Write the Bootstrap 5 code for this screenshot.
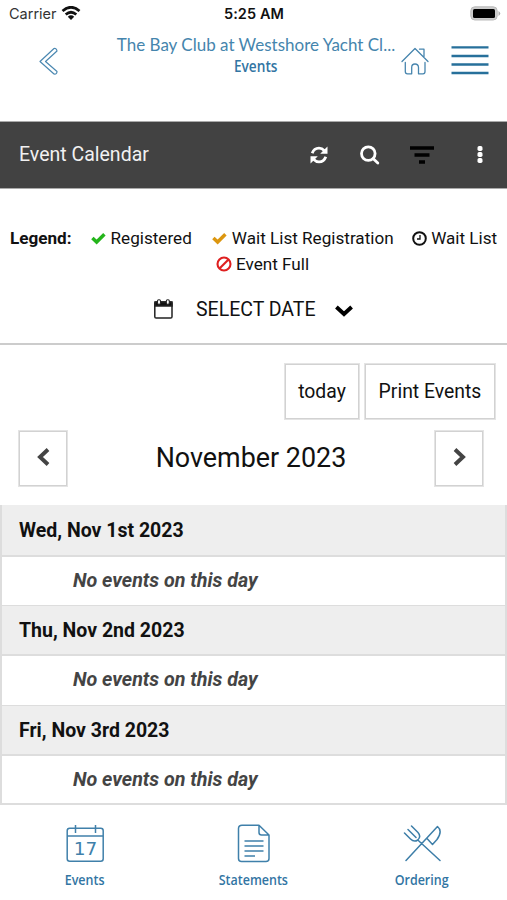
<!DOCTYPE html>
<html lang="en">
<head>
<meta charset="utf-8">
<meta name="viewport" content="width=device-width, initial-scale=1">
<title>Event Calendar</title>
<link href="https://cdn.jsdelivr.net/npm/bootstrap@5.3.0/dist/css/bootstrap.min.css" rel="stylesheet">
<style>
body{font-family:Roboto,sans-serif;color:#111;height:900px;overflow:hidden;background:#fff}
svg{display:block;flex:none}
.status{height:28px;font:14.5px/28px Inter,sans-serif;padding:0 8px 0 9px}
.status .side{width:130px}
.carrier{font-size:14.5px;color:#333}
.clock{font-weight:600;font-size:14.5px;letter-spacing:.1px}
.blue{color:#3275a3}
.apphead{height:93px;padding:6px 18px 0 38px}
.brand{font:17px/22px Lato,sans-serif;white-space:nowrap;color:#4585ad}
.page{font:600 15.5px/20px "Open Sans",sans-serif}
.page span,.tab span{display:inline-block;transform:scaleX(.88)}
.tools{height:68px;background:#424242;border-top:1px solid #aaa;border-bottom:1px solid #aaa;color:#f1f1f1;font-size:19.5px;padding:0 24px 1px 19px}
.legend{height:156px;border-bottom:2px solid #ccc;font-size:17.13px;line-height:26px;padding-top:36px}
.legend-row{height:26px;white-space:nowrap}
.select{font-size:19.5px;margin-top:20px;height:26px;padding-left:154px}
.box{border:1.5px solid #d2d2d2;outline:.5px solid #e4e4e4;height:55px;border-radius:0;font-size:19.4px;color:#111;padding:0;background:#fff;display:flex;align-items:center;justify-content:center}
.month{font-size:26.9px;line-height:32px;padding-bottom:1px}
.days{border:solid #ddd;border-width:0 2px 2px 2px;margin-top:19px;height:300px}
.day{height:51.2px;background:#eee;font-weight:700;font-size:19.5px;padding:0 17px;line-height:52px;border-bottom:2px solid #ddd}
.day:first-child{height:52px}
.none{height:48.2px;font-weight:700;font-style:italic;font-size:19.7px;padding-left:71px;line-height:47px;color:#444}
.none+.day{border-top:1px solid #ddd;line-height:49px}
.tabs{padding-top:19px}
.tab{width:168.5px;font:600 14.2px/20px "Open Sans",sans-serif;color:#3275a3}
.tab span{margin-top:7px}
</style>
<script src="https://cdn.jsdelivr.net/npm/bootstrap@5.3.0/dist/js/bootstrap.bundle.min.js"></script>
</head>
<body>
<div class="status d-flex justify-content-between align-items-center">
  <div class="side d-flex align-items-center"><span class="carrier">Carrier</span>
    <svg class="ms-1" style="margin-top:-2px" width="20" height="15" viewBox="0 0 20 15" fill="none" stroke="#111" stroke-width="2.7"><path d="M1.5 5Q10-2.5 18.5 5M4.7 8.5Q10 4 15.3 8.5"/><path d="M6.8 10.7Q10 8 13.2 10.7L10 14Z" fill="#111" stroke="none"/></svg></div>
  <div class="clock">5:25 AM</div>
  <div class="side d-flex justify-content-end"><svg style="margin:-2px -2px 0 0" width="31" height="15" viewBox="0 0 31 15"><rect x=".8" y=".8" width="26.4" height="13.2" rx="4" fill="#ccc" stroke="#bbb"/><rect x="3" y="3" width="22" height="9" rx="1.5" fill="#000"/><path d="M28.5 5Q32 7.3 28.5 10Z" fill="#aaa"/></svg></div>
</div>
<header class="apphead d-flex blue">
  <svg style="margin-top:9px" width="20" height="36" viewBox="0 0 20 36" fill="none" stroke="#4b88b1" stroke-width="1.2" stroke-linejoin="round"><path d="M16 5.5Q18.5 5 19 8L7.5 18.5L19 28.5Q19 31.5 16 31L2 18.5Z"/></svg>
  <div class="text-center flex-shrink-0" style="width:280px;margin-left:58px"><div class="brand">The Bay Club at Westshore Yacht Cl...</div><div class="page"><span>Events</span></div></div>
  <svg style="margin:13px 0 0 5px" width="28" height="28" viewBox="0 0 28 28" fill="none" stroke="#4785ae" stroke-width="1.3" stroke-linecap="round" stroke-linejoin="round"><path d="M1 14.5L14 1.5L27 14.5M18.5 2.2H23V9.5M4.3 15.5V24.5Q4.3 26.8 6.5 26.8H10.7V20.5Q10.7 17 14 17T17.5 20.5V26.8H22Q24 26.8 24 24.5V15.5"/></svg>
  <svg style="margin:11px 0 0 22px" width="38" height="31" viewBox="0 0 38 31" stroke="#27709b" stroke-width="2.3"><path d="M.5 2.3H37.5M.5 11H37.5M.5 19.5H37.5M.5 28H37.5"/></svg>
</header>
<div class="tools d-flex align-items-center"><span class="me-auto">Event Calendar</span>
  <svg width="18" height="18" viewBox="0 0 18 18" fill="none" stroke="#fff" stroke-width="2.8"><path d="M2.2 7.3Q4 2.2 9 2.2Q12 2.2 14.5 4.8M15.8 10.7Q14 15.8 9 15.8Q6 15.8 3.5 13.2"/><path d="M17.5 .5V7.8H10.2ZM.5 17.5V10.2H7.8Z" fill="#fff" stroke="none"/></svg>
  <svg style="margin-left:32px" width="20" height="20" viewBox="0 0 20 20" fill="none" stroke="#fff" stroke-width="2.8"><circle cx="8.3" cy="8.6" r="6.8"/><path d="M13.3 13.7L17.8 18" stroke-linecap="round"/></svg>
  <svg style="margin-left:30px" width="24" height="18" viewBox="0 0 24 18" stroke="#000" stroke-width="3.4"><path d="M0 2H24M4.5 9H19.5M9 16H15"/></svg>
  <svg style="margin-left:43px" width="6" height="18" viewBox="0 0 6 18" fill="#fff"><rect x=".5" y="0" width="5" height="5" rx="1.7"/><rect x=".5" y="6" width="5" height="5" rx="1.7"/><rect x=".5" y="12" width="5" height="5" rx="1.7"/></svg>
</div>
<section class="legend">
  <div class="legend-row d-flex align-items-center" style="padding-left:10px"><b>Legend:</b>
    <svg style="margin:0 5px 0 19px" width="15" height="13" viewBox="0 0 16 13" fill="none" stroke="#24b51b" stroke-width="3.7"><path d="M1.5 6L6 10.3L14.3 2"/></svg>Registered
    <svg style="margin:0 5px 0 20px" width="15" height="13" viewBox="0 0 16 13" fill="none" stroke="#dc960f" stroke-width="3.7"><path d="M1.5 6L6 10.3L14.3 2"/></svg>Wait List Registration
    <svg style="margin:0 4px 0 18.5px" width="15" height="15" viewBox="0 0 15 15" fill="none" stroke="#111" stroke-width="2"><circle cx="7.5" cy="7.5" r="6.3"/><path d="M8 4V8H5" stroke-width="1.3"/></svg>Wait List</div>
  <div class="legend-row d-flex align-items-center" style="padding-left:216px"><svg class="me-1" width="16" height="16" viewBox="0 0 16 16" fill="none" stroke="#df2020" stroke-width="2.1"><circle cx="8" cy="8" r="6.5"/><path d="M3.5 12.5L12.5 3.5"/></svg>Event Full</div>
  <div class="select d-flex align-items-center">
    <svg style="margin-top:-2px" width="19" height="20" viewBox="0 0 19 20" fill="none" stroke="#222" stroke-width="1.5"><rect x=".8" y="3" width="17.2" height="16" rx="1.3"/><path d="M1 3H18V7H1Z" fill="#111"/><rect x="3.5" y=".8" width="3" height="4.5" rx="1.2" fill="#fff" stroke-width="1.1"/><rect x="12.3" y=".8" width="3" height="4.5" rx="1.2" fill="#fff" stroke-width="1.1"/></svg>
    <span style="margin-left:23px">SELECT DATE</span>
    <svg style="margin-left:19px;margin-top:2px" width="18" height="12" viewBox="0 0 18 12" fill="none" stroke="#000" stroke-width="3.9"><path d="M1.4 2L9 9L16.6 2"/></svg></div>
</section>
<div class="d-flex justify-content-end" style="padding:19px 12px 0 0;gap:6px"><button class="box btn" style="width:74px">today</button><button class="box btn" style="width:130px">Print Events</button></div>
<div class="d-flex justify-content-between align-items-center" style="padding:12px 24px 0 19px"><button class="box btn" style="width:48px" aria-label="Previous month"><svg style="margin-top:-3px" width="13" height="18" viewBox="0 0 13 18" fill="none" stroke="#444" stroke-width="3.9"><path d="M11 1.5L3 9L11 16.5"/></svg></button><span class="month">November 2023</span><button class="box btn" style="width:48px" aria-label="Next month"><svg style="margin-top:-3px" width="13" height="18" viewBox="0 0 13 18" fill="none" stroke="#444" stroke-width="3.9"><path d="M2 1.5L10 9L2 16.5"/></svg></button></div>
<main class="days">
  <div class="day">Wed, Nov 1st 2023</div><div class="none">No events on this day</div>
  <div class="day">Thu, Nov 2nd 2023</div><div class="none">No events on this day</div>
  <div class="day">Fri, Nov 3rd 2023</div><div class="none">No events on this day</div>
</main>
<nav class="tabs d-flex justify-content-center text-center">
  <div class="tab d-flex flex-column align-items-center"><svg width="39" height="39" viewBox="0 0 39 39" fill="none" stroke="#4080aa" stroke-width="1.5"><rect x="1.2" y="4.2" width="36" height="33" rx="2.5"/><path d="M1 12H37M9.5 1V9M29.5 1V9"/><text x="19.5" y="30.5" text-anchor="middle" font-family="DejaVu Sans" font-weight="400" font-size="18.5" fill="#4080aa" stroke="none">17</text></svg><span>Events</span></div>
  <div class="tab d-flex flex-column align-items-center"><svg width="34" height="39" viewBox="0 0 34 39" fill="none" stroke="#3f80aa" stroke-width="1.5" stroke-linejoin="round"><path d="M5 1.2H22L32 11V34.5Q32 37.5 29 37.5H4.5Q1.5 37.5 1.5 34.5V4.5Q1.5 1.2 5 1.2ZM22 1.2V8.5Q22 11 24.5 11H32M7.5 17H26.5M7.5 22H26.5M7.5 27H26.5M7.5 32H18"/></svg><span>Statements</span></div>
  <div class="tab d-flex flex-column align-items-center"><svg width="39" height="39" viewBox="0 0 39 39" fill="none" stroke="#3d7ea8" stroke-width="1.5" stroke-linecap="round" stroke-linejoin="round"><path d="M3 36.5L34.5 2.5Q40 7 34 15.5L29.5 20.5L24 14.5M37 36.5L14.8 16M1.5 9L7.5 15Q11 18.5 14.8 16Q18.5 12.5 15 8.5L8.5 2M5 5.5L13 13.5"/></svg><span>Ordering</span></div>
</nav>
</body>
</html>
